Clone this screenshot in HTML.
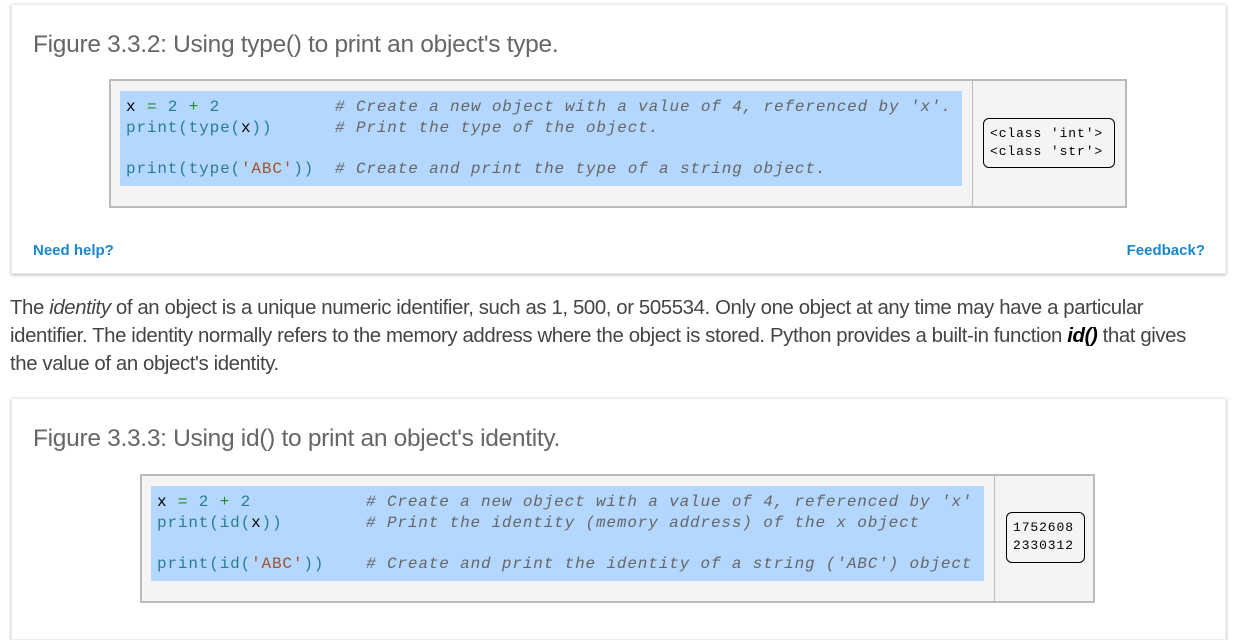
<!DOCTYPE html>
<html><head><style>
body{margin:0;background:#fff;width:1238px;height:613px;overflow:hidden;font-family:"Liberation Sans",sans-serif;position:relative}
.card{position:absolute;left:11px;width:1213px;background:#fff;box-shadow:0 1px 3px rgba(0,0,0,.3);border:1px solid #eee}
.title{position:absolute;left:21px;font-size:24.5px;color:#666;font-weight:300;letter-spacing:-0.3px}
.box{position:absolute;background:#f4f4f4;border:2px solid #bbb;box-sizing:border-box}
.code{position:absolute;background:#b3d7ff;font-family:"Liberation Mono",monospace;font-size:16px;letter-spacing:0.85px;line-height:20.5px;color:#2b7d8c;white-space:pre;padding:6px 6px 0;box-sizing:border-box}
.c{color:#666;font-style:italic}.s{color:#a0522d}.k{color:#000}.g{color:#228b22}
.div{position:absolute;top:0;bottom:0;width:1px;background:#bbb}
.out{position:absolute;background:#f4f4f4;border:1px solid #000;border-radius:6px;font-family:"Liberation Mono",monospace;font-size:13px;letter-spacing:0.9px;line-height:18px;white-space:pre;padding:6px 6px 0;box-sizing:border-box;color:#000}
.link{position:absolute;font-weight:bold;color:#1a87cf;font-size:15px}
p{position:absolute;left:10px;top:294px;margin:0;white-space:nowrap;font-size:20.4px;line-height:28px;color:#444;letter-spacing:-0.4px}
</style></head><body>
<div class="card" style="top:4px;height:268px">
<div class="title" style="top:26px">Figure 3.3.2: Using type() to print an object's type.</div>
<div class="box" style="left:97px;top:74px;width:1018px;height:129px">
<div class="code" style="left:9px;top:10px;width:842px;height:95px"><span class="k">x</span> <span class="g">=</span> 2 <span class="g">+</span> 2           <span class="c"># Create a new object with a value of 4, referenced by 'x'.</span>
print(type(<span class="k">x</span>))      <span class="c"># Print the type of the object.</span>

print(type(<span class="s">'ABC'</span>))  <span class="c"># Create and print the type of a string object.</span></div>
<div class="div" style="left:861px"></div>
<div class="out" style="left:872px;top:37px;width:132px;height:50px">&lt;class 'int'&gt;
&lt;class 'str'&gt;</div>
</div>
<div class="link" style="left:21px;top:237px">Need help?</div>
<div class="link" style="right:20px;top:237px">Feedback?</div>
</div>
<p>The <i>identity</i> of an object is a unique numeric identifier, such as 1, 500, or 505534. Only one object at any time may have a particular<br>identifier. The identity normally refers to the memory address where the object is stored. Python provides a built-in function <b style="color:#000"><i>id()</i></b> that gives<br>the value of an object's identity.</p>
<div class="card" style="top:398px;height:240px">
<div class="title" style="top:26px">Figure 3.3.3: Using id() to print an object's identity.</div>
<div class="box" style="left:128px;top:75px;width:955px;height:129px">
<div class="code" style="left:9px;top:10px;width:833px;height:95px"><span class="k">x</span> <span class="g">=</span> 2 <span class="g">+</span> 2           <span class="c"># Create a new object with a value of 4, referenced by 'x'</span>
print(id(<span class="k">x</span>))        <span class="c"># Print the identity (memory address) of the x object</span>

print(id(<span class="s">'ABC'</span>))    <span class="c"># Create and print the identity of a string ('ABC') object</span></div>
<div class="div" style="left:852px"></div>
<div class="out" style="left:864px;top:36px;width:79px;height:51px">1752608
2330312</div>
</div>
</div>
</body></html>
